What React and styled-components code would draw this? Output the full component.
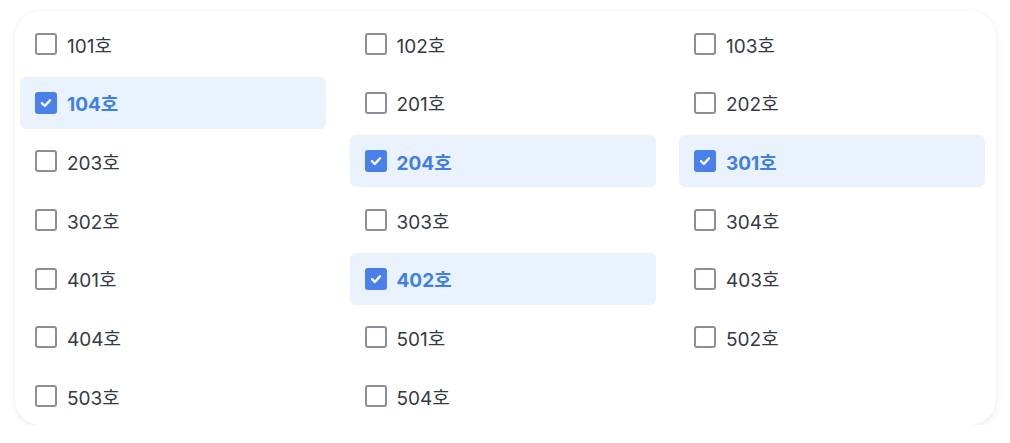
import React, { useState } from "react";
import styled, { createGlobalStyle } from "styled-components";

const rooms = [
    "101", "102", "103",
    "104", "201", "202",
    "203", "204", "301",
    "302", "303", "304",
    "401", "402", "403",
    "404", "501", "502",
    "503", "504",
];

const App = () => {
    const [picked, setPicked] = useState(["104", "204", "301", "402"]);

    const toggle = (room) => {
        setPicked((prev) =>
            prev.includes(room) ? prev.filter((r) => r !== room) : [...prev, room]
        );
    };

    return (
        <>
            <GlobalStyle />
            <Page>
                <Card>
                    <Grid>
                        {rooms.map((room) => {
                            const on = picked.includes(room);
                            return (
                                <Row key={room} $on={on} onClick={() => toggle(room)}>
                                    <Box $on={on}>
                                        {on && (
                                            <svg width="14" height="14" viewBox="0 0 14 14">
                                                <path
                                                    d="M3 7.2 L5.9 10 L11 4.3"
                                                    fill="none"
                                                    stroke="#fff"
                                                    strokeWidth="2.4"
                                                    strokeLinecap="round"
                                                    strokeLinejoin="round"
                                                />
                                            </svg>
                                        )}
                                    </Box>
                                    <Label $on={on}>{room}호</Label>
                                </Row>
                            );
                        })}
                    </Grid>
                </Card>
            </Page>
        </>
    );
};

//--------------------------------- STYLES ---------------------------------
const GlobalStyle = createGlobalStyle`
    body {
        margin: 0;
        background: #ffffff;
        font-family: "Inter", "Noto Sans CJK KR", sans-serif;
    }
`;

const Page = styled.div`
    padding: 11px 14px 0 15px;
`;

const Card = styled.div`
    width: 981px;
    height: 414px;
    box-sizing: border-box;
    background: #fff;
    border-radius: 26px;
    box-shadow: 0 2px 9px rgba(0, 0, 0, 0.07), 0 0 2px rgba(0, 0, 0, 0.04);
    padding: 7px 11px 0 5px;
    overflow: hidden;
`;

const Grid = styled.div`
    display: grid;
    grid-template-columns: repeat(3, 306px);
    column-gap: 23.5px;
    grid-auto-rows: 52px;
    row-gap: 6.7px;
`;

const Row = styled.div`
    display: flex;
    align-items: center;
    gap: 10px;
    padding-left: 15px;
    border-radius: 6px;
    background: ${(p) => (p.$on ? "#eaf2fe" : "transparent")};
    cursor: pointer;
`;

const Box = styled.span`
    width: 22px;
    height: 22px;
    box-sizing: border-box;
    border-radius: 3px;
    border: ${(p) => (p.$on ? "none" : "2.2px solid #8a8f99")};
    background: ${(p) => (p.$on ? "#4a80e9" : "#fff")};
    display: flex;
    align-items: center;
    justify-content: center;
    flex-shrink: 0;
`;

const Label = styled.span`
    font-size: 19px;
    letter-spacing: 0;
    font-weight: ${(p) => (p.$on ? 650 : 400)};
    color: ${(p) => (p.$on ? "#3f7fe6" : "#343a44")};
`;

export default App;
